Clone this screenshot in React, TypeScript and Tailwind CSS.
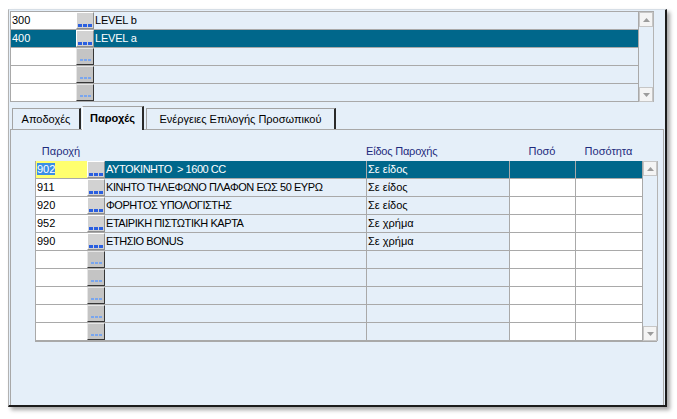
import React from "react";

const GRID = "border-[#a9a9a9]";

type Row = { code: string; desc: string; type: string; selected?: boolean };

const levels = [
  { code: "300", text: "LEVEL b" },
  { code: "400", text: "LEVEL a", selected: true },
  { code: "", text: "" },
  { code: "", text: "" },
  { code: "", text: "" },
];

const benefits: Row[] = [
  { code: "902", desc: "ΑΥΤΟΚΙΝΗΤΟ  > 1600 CC", type: "Σε είδος", selected: true },
  { code: "911", desc: "ΚΙΝΗΤΟ ΤΗΛΕΦΩΝΟ ΠΛΑΦΟΝ ΕΩΣ 50 ΕΥΡΩ", type: "Σε είδος" },
  { code: "920", desc: "ΦΟΡΗΤΟΣ ΥΠΟΛΟΓΙΣΤΗΣ", type: "Σε είδος" },
  { code: "952", desc: "ΕΤΑΙΡΙΚΗ ΠΙΣΤΩΤΙΚΗ ΚΑΡΤΑ", type: "Σε χρήμα" },
  { code: "990", desc: "ΕΤΗΣΙΟ BONUS", type: "Σε χρήμα" },
  { code: "", desc: "", type: "" },
  { code: "", desc: "", type: "" },
  { code: "", desc: "", type: "" },
  { code: "", desc: "", type: "" },
  { code: "", desc: "", type: "" },
];

const EllipsisButton = ({ empty = false }: { empty?: boolean }) => (
  <div
    className={`w-[18px] h-full shrink-0 flex items-end justify-center gap-[1px] border ${
      empty
        ? "bg-[#c4c4c4] border-t-[#e6e6e6] border-l-[#e6e6e6] border-r-[#363636] border-b-[#363636] pb-[3px]"
        : "bg-[#d2d2d2] border-t-white border-l-white border-r-[#8e8e8e] border-b-[#8e8e8e] pb-[1px]"
    }`}
  >
    {[0, 1, 2].map((i) =>
      empty ? (
        <span key={i} className="w-[3px] h-[2px] bg-[#7aa6ee]" />
      ) : (
        <span key={i} className="w-[4px] h-[3px] bg-[#2a5fe0]" />
      )
    )}
  </div>
);

const Arrow = ({ up = false }: { up?: boolean }) => (
  <div className="h-[15px] w-full bg-[#f4f4f4] border border-[#c6c6c6] flex items-center justify-center">
    <svg width="7" height="4" viewBox="0 0 7 4">
      <path d={up ? "M0 4 L3.5 0 L7 4 Z" : "M0 0 L3.5 4 L7 0 Z"} fill="#9c9c9c" />
    </svg>
  </div>
);

const ScrollBar = () => (
  <div className="w-[15px] shrink-0 flex flex-col justify-between bg-[#e5eff9] border-r border-[#b4b4b4]">
    <Arrow up />
    <Arrow />
  </div>
);

const Tab = ({
  label,
  width,
  selected = false,
  className = "",
}: {
  label: string;
  width: string;
  selected?: boolean;
  className?: string;
}) => (
  <div
    className={`${width} ${className} flex items-center justify-center bg-[#e5eff9] border-t border-l border-t-[#a3a3a3] border-l-[#a3a3a3] border-r-2 border-r-[#2a2a2a] ${
      selected ? "h-[24px] -mb-[1px] relative z-10 font-bold border-l-white" : "h-[21px]"
    }`}
  >
    {label}
  </div>
);

export default function App() {
  return (
    <div className="w-[677px] h-[419px] bg-white overflow-hidden font-['Liberation_Sans',Arial,sans-serif] text-[11px] text-black">
      <div className="ml-[8px] mt-[9px] w-[659px] h-[398px] bg-[#e5eff9] border-l border-t border-l-[#b2b2b2] border-t-[#d6dee6] border-r-2 border-b-2 border-r-[#1c1c1c] border-b-[#1c1c1c] shadow-[3px_3px_4px_rgba(0,0,0,0.35)] pl-[1px] pt-[1px] flex flex-col">
        {/* top grid */}
        <div className={`w-[644px] h-[91px] flex border-t border-l ${GRID}`}>
          <div className={`flex-1 flex flex-col border-r ${GRID}`}>
            {levels.map((r, i) => (
              <div key={i} className={`h-[18px] flex border-b ${GRID}`}>
                <div
                  className={`w-[65px] pl-[1px] leading-[17px] ${
                    r.selected ? "bg-[#00678b] text-white" : "bg-white"
                  }`}
                >
                  {r.code}
                </div>
                <EllipsisButton empty={!r.code} />
                <div
                  className={`flex-1 pl-[1px] leading-[17px] tracking-[-0.2px] ${
                    r.selected ? "bg-[#00678b] text-white" : "bg-[#e5eff9]"
                  }`}
                >
                  {r.text}
                </div>
              </div>
            ))}
          </div>
          <ScrollBar />
        </div>

        {/* tabs */}
        <div className="h-[27px] flex items-end pl-[2px]">
          <Tab label="Αποδοχές" width="w-[69px]" />
          <Tab label="Παροχές" width="w-[62px]" selected className="ml-[1px]" />
          <Tab label="Ενέργειες Επιλογής Προσωπικού" width="w-[190px]" className="ml-[2px]" />
        </div>

        {/* tab page */}
        <div className="w-[654px] flex-1 border-t border-l border-r border-[#a8a8a8] pl-[24px]">
          <div className="h-[31px] flex items-end pb-[3px] leading-[13px] text-[#1e2b7d]">
            <div className="w-[52px] text-center">Παροχή</div>
            <div className="w-[279px]" />
            <div className="w-[143px] tracking-[-0.2px]">Είδος Παροχής</div>
            <div className="w-[66px] text-center">Ποσό</div>
            <div className="w-[67px] text-center">Ποσότητα</div>
          </div>

          <div className={`w-[622px] h-[181px] flex border-l border-b ${GRID}`}>
            <div className="flex flex-col">
              {benefits.map((r, i) => {
                const sel = r.selected;
                return (
                  <div key={i} className={`h-[18px] flex border-b ${GRID}`}>
                    <div
                      className={`w-[51px] pl-[1px] leading-[16px] ${
                        sel ? "bg-[#ffff6e]" : "bg-white"
                      }`}
                    >
                      {sel ? (
                        <span className="bg-[#3a8ee6] text-white">{r.code}</span>
                      ) : (
                        r.code
                      )}
                    </div>
                    <EllipsisButton empty={!r.code} />
                    <div
                      className={`w-[262px] pl-[1px] leading-[16px] whitespace-pre tracking-[-0.45px] border-r ${GRID} ${
                        sel ? "bg-[#00678b] text-white" : "bg-[#e5eff9]"
                      }`}
                    >
                      {r.desc}
                    </div>
                    <div
                      className={`w-[143px] pl-[1px] leading-[16px] border-r ${GRID} ${
                        sel ? "bg-[#00678b] text-white" : "bg-[#e5eff9]"
                      }`}
                    >
                      {r.type}
                    </div>
                    <div
                      className={`w-[66px] border-r ${GRID} ${sel ? "bg-[#00678b]" : "bg-white"}`}
                    />
                    <div
                      className={`w-[67px] border-r ${GRID} ${sel ? "bg-[#00678b]" : "bg-white"}`}
                    />
                  </div>
                );
              })}
            </div>
            <ScrollBar />
          </div>
        </div>
      </div>
    </div>
  );
}
